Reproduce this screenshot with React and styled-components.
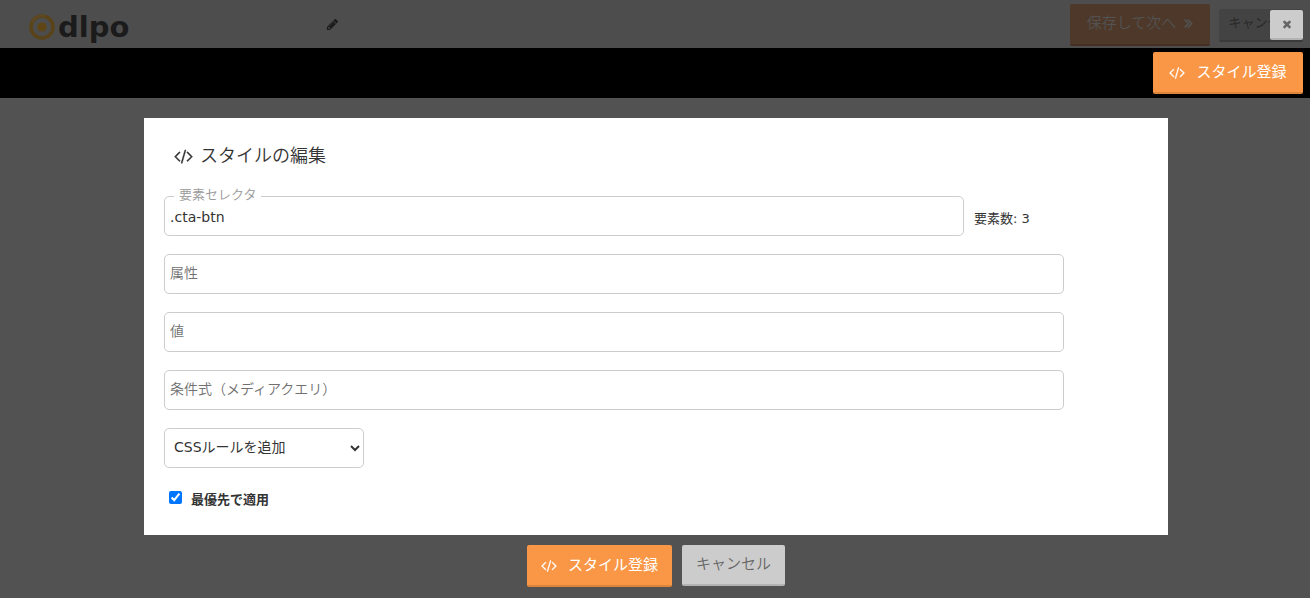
import React from "react";
import styled, { createGlobalStyle } from "styled-components";

const GlobalStyle = createGlobalStyle`
  *, *::before, *::after { box-sizing: border-box; }
  html { height: 100%; }
  body {
    margin: 0;
    min-height: 100%;
    background: #525252;
    color: #333;
    font-family: "DejaVu Sans", "Noto Sans CJK JP", sans-serif;
    font-size: 14px;
    line-height: 20px;
  }
  button, input, select { font: inherit; color: inherit; }
`;

const Svg = styled.svg`
  display: block;
  flex: none;
  fill: currentColor;
  width: ${(p) => p.$w}px;
  height: ${(p) => p.$h}px;
`;

const CodeIcon = ({ size = 15 }) => (
  <Svg viewBox="0 0 1920 1792" $w={Math.round((size * 15) / 14)} $h={size} stroke="currentColor" strokeWidth="30" aria-hidden="true">
    <path d="M617 1399l-50 50q-10 10-23 10t-23-10l-466-466q-10-10-10-23t10-23l466-466q10-10 23-10t23 10l50 50q10 10 10 23t-10 23l-393 393 393 393q10 10 10 23t-10 23zm591-1067l-373 1291q-4 13-15.5 19.5t-23.5 2.5l-62-17q-13-4-19.5-15.5t-2.5-24.5l373-1291q4-13 15.5-19.5t23.5-2.5l62 17q13 4 19.5 15.5t2.5 24.5zm657 651l-466 466q-10 10-23 10t-23-10l-50-50q-10-10-10-23t10-23l393-393-393-393q-10-10-10-23t10-23l50-50q10-10 23-10t23 10l466 466q10 10 10 23t-10 23z" />
  </Svg>
);

const PencilIcon = () => (
  <Svg viewBox="0 0 1792 1792" $w={13} $h={13} aria-hidden="true">
    <path d="M491 1536l91-91-235-235-91 91v107h128v128h107zm523-928q0-22-22-22-10 0-17 7l-542 542q-7 7-7 17 0 22 22 22 10 0 17-7l542-542q7-7 7-17zm-54-192l416 416-832 832h-416v-416zm683 96q0 53-37 90l-166 166-416-416 166-165q36-38 90-38 53 0 91 38l235 234q37 39 37 91z" />
  </Svg>
);

const AnglesIcon = () => (
  <Svg viewBox="384 0 1024 1792" $w={9} $h={16} stroke="currentColor" strokeWidth="60" aria-hidden="true">
    <path d="M979 960q0 13-10 23l-466 466q-10 10-23 10t-23-10l-50-50q-10-10-10-23t10-23l393-393-393-393q-10-10-10-23t10-23l50-50q10-10 23-10t23 10l466 466q10 10 10 23zm384 0q0 13-10 23l-466 466q-10 10-23 10t-23-10l-50-50q-10-10-10-23t10-23l393-393-393-393q-10-10-10-23t10-23l50-50q10-10 23-10t23 10l466 466q10 10 10 23z" />
  </Svg>
);

const TimesIcon = () => (
  <Svg viewBox="0 0 1792 1792" $w={12} $h={12} aria-hidden="true">
    <path d="M1490 1322q0 40-28 68l-136 136q-28 28-68 28t-68-28l-294-294-294 294q-28 28-68 28t-68-28l-136-136q-28-28-28-68t28-68l294-294-294-294q-28-28-28-68t28-68l136-136q28-28 68-28t68 28l294 294 294-294q28-28 68-28t68 28l136 136q28 28 28 68t-28 68l-294 294 294 294q28 28 28 68z" />
  </Svg>
);

const Header = styled.header`
  position: relative;
  display: flex;
  align-items: center;
  height: 48px;
  padding: 0 7px 0 28px;
  background: #4d4d4d;
`;

const Logo = styled.a`
  display: flex;
  align-items: center;
  gap: 2px;
  padding-top: 5px;
  color: #1b1b1b;
  text-decoration: none;
`;

const LogoMark = styled.svg`
  display: block;
  width: 28px;
  height: 28px;
`;

const LogoName = styled.span`
  font: 700 29px/28px "DejaVu Sans", sans-serif;
`;

const EditButton = styled.button`
  display: flex;
  margin-left: 197px;
  padding: 0;
  border: 0;
  background: none;
  color: #1a1a1a;
`;

const HeaderActions = styled.div`
  display: flex;
  align-items: center;
  gap: 9px;
  margin-left: auto;
  padding-top: 2px;
`;

const tones = {
  primary: ["#f99746", "#db843c", "#fff"],
  plain: ["#ccc", "#b3b3b3", "#666"],
  primaryDim: ["#4d3829", "#433023", "#535353"],
  plainDim: ["#434343", "#3b3b3b", "#262626"],
};

const Button = styled.button`
  display: flex;
  align-items: center;
  justify-content: center;
  gap: ${(p) => p.$gap || 11}px;
  min-width: ${(p) => p.$w || 0}px;
  height: ${(p) => p.$h || 42}px;
  padding: 0 ${(p) => p.$pad || 14}px ${(p) => (p.$tone === "primary" ? 0 : 2)}px;
  border: 0;
  border-bottom: 2px solid ${(p) => tones[p.$tone][1]};
  border-radius: 2px;
  background: ${(p) => tones[p.$tone][0]};
  color: ${(p) => tones[p.$tone][2]};
  font-size: ${(p) => (p.$small ? 13 : 15)}px;
  font-weight: ${(p) => (p.$tone === "primary" ? 400 : 350)};
  white-space: nowrap;
  cursor: pointer;
`;

const CloseButton = styled(Button)`
  position: absolute;
  top: 10px;
  right: 7px;
  width: 33px;
  padding-bottom: 0;
`;

const ActionBar = styled.div`
  display: flex;
  justify-content: flex-end;
  padding: 4px 7px;
  background: #000;
`;

const Main = styled.main`
  padding: 20px 0 10px 2px;
`;

const Panel = styled.section`
  max-width: 1024px;
  margin: 0 auto;
  padding: 25px 20px;
  background: #fff;
`;

const Title = styled.h1`
  display: flex;
  align-items: center;
  gap: 7px;
  margin: 0 0 27px;
  padding-left: 10px;
  font-size: 18px;
  line-height: 26px;
  font-weight: 350;
`;

const Form = styled.form`
  display: flex;
  flex-direction: column;
  gap: 18px;
`;

const Field = styled.div`
  display: flex;
  align-items: center;
  gap: 10px;
`;

const TextInput = styled.input`
  display: block;
  width: 100%;
  max-width: 900px;
  height: 40px;
  padding: 0 5px 2px;
  border: 1px solid #ccc;
  border-radius: 5px;
  background: #fff;
  &::placeholder { color: #707070; opacity: 1; font-weight: 350; }
`;

const Floating = styled.div`
  position: relative;
  flex: 0 1 800px;

  ${TextInput} { padding: 2px 5px 0; }
`;

const FloatingLabel = styled.label`
  position: absolute;
  top: -11px;
  left: 10px;
  padding: 0 5px;
  background: #fff;
  color: #999;
  font-size: 13px;
  font-weight: 350;
`;

const Count = styled.span`
  padding-top: 6px;
  font-size: 13px;
`;

const Select = styled.select`
  width: 200px;
  height: 40px;
  padding: 0 0 2px 5px;
  border: 1px solid #ccc;
  border-radius: 5px;
  background: #fff;
`;

const CheckLabel = styled.label`
  display: flex;
  align-items: center;
  gap: 9px;
  margin-top: 4px;
  padding-left: 5px;
  font-size: 13px;
  font-weight: 700;
`;

const Checkbox = styled.input`
  width: 13px;
  height: 13px;
  margin: 0 0 5px;
`;

const Footer = styled.footer`
  display: flex;
  align-items: flex-start;
  justify-content: center;
  gap: 10px;
  padding-top: 10px;
`;

export default function App() {
  return (
    <>
      <GlobalStyle />
      <Header>
        <Logo href="#">
          <LogoMark viewBox="0 0 28 28" aria-hidden="true">
            <circle cx="14" cy="14" r="11" fill="none" stroke="#5a4319" strokeWidth="3.6" />
            <path d="M4 9a11 11 0 0 1 13-6" fill="none" stroke="#5f4a24" strokeWidth="2" />
            <circle cx="14" cy="14" r="4.6" fill="#5f4514" />
          </LogoMark>
          <LogoName>dlpo</LogoName>
        </Logo>
        <EditButton type="button" aria-label="編集"><PencilIcon /></EditButton>
        <HeaderActions>
          <Button type="button" $tone="primaryDim" $w={140} $gap={8}>
            保存して次へ <AnglesIcon />
          </Button>
          <Button type="button" $tone="plainDim" $w={84} $pad={9} $h={33} $small>キャンセル</Button>
        </HeaderActions>
        <CloseButton type="button" $tone="plain" $h={30} $pad={8} aria-label="閉じる">
          <TimesIcon />
        </CloseButton>
      </Header>
      <ActionBar>
        <Button type="button" $tone="primary" $w={150}><CodeIcon />スタイル登録</Button>
      </ActionBar>
      <Main>
        <Panel>
          <Title><CodeIcon size={18} />スタイルの編集</Title>
          <Form id="style-form" onSubmit={(e) => e.preventDefault()}>
            <Field>
              <Floating>
                <TextInput id="selector" defaultValue=".cta-btn" />
                <FloatingLabel htmlFor="selector">要素セレクタ</FloatingLabel>
              </Floating>
              <Count>要素数: 3</Count>
            </Field>
            <TextInput placeholder="属性" aria-label="属性" />
            <TextInput placeholder="値" aria-label="値" />
            <TextInput placeholder="条件式（メディアクエリ）" aria-label="条件式（メディアクエリ）" />
            <Select aria-label="追加方法" defaultValue="css">
              <option value="css">CSSルールを追加</option>
            </Select>
            <CheckLabel>
              <Checkbox type="checkbox" defaultChecked />
              最優先で適用
            </CheckLabel>
          </Form>
        </Panel>
        <Footer>
          <Button type="submit" form="style-form" $tone="primary"><CodeIcon />スタイル登録</Button>
          <Button type="button" $tone="plain" $h={41}>キャンセル</Button>
        </Footer>
      </Main>
    </>
  );
}
